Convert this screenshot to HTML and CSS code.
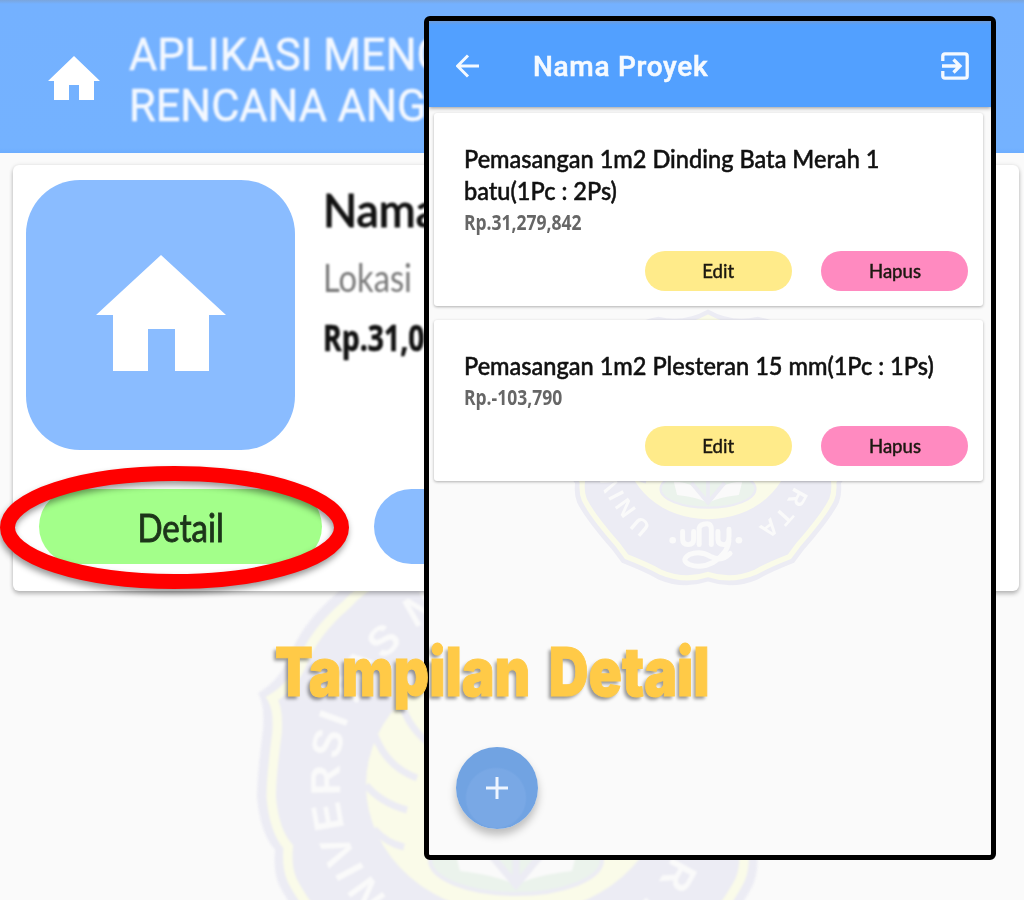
FILE: index.html
```html
<!DOCTYPE html>
<html lang="id">
<head>
<meta charset="utf-8">
<title>Tampilan Detail</title>
<link rel="stylesheet" href="styles.css">
</head>
<body>
<main class="stage">
  <section class="screen">
    <svg class="crest crest-large" viewBox="-270 -360 540 520">
      <defs>
        <path id="shield" d="M0-350 Q-45-325-90-337 Q-150-325-179-292 Q-214-262-226-230 Q-236-205-258-192 Q-251-180-253-155 Q-259-110-259-88 Q-256-52-241-35 Q-243-14-237 0 Q-222 30-174 85 L-156 109 Q-115 125-90 139 Q-45 158 0 143 Q45 158 90 139 Q115 125 156 109 L174 85 Q222 30 237 0 Q243-14 241-35 Q256-52 259-88 Q259-110 253-155 Q251-180 258-192 Q236-205 226-230 Q214-262 179-292 Q150-325 90-337 Q45-325 0-350Z"/>
        <g id="crest">
          <use href="#shield" class="c-body"/>
          <use href="#shield" class="c-band" transform="translate(0 -5) scale(.945)"/>
          <ellipse class="c-gold" cx="0" cy="-100" rx="150" ry="130"/>
          <path class="c-feather" d="M-118-195 Q-112-160-85-140 M-142-152 Q-130-118-99-107 M-150-100 Q-135-82-109-75 M-142-56 Q-130-42-112-38 M118-195 Q112-160 85-140 M142-152 Q130-118 99-107"/>
          <ellipse class="c-green" cx="0" cy="-25" rx="86" ry="34"/>
          <path class="c-page" d="M-62-38 Q-20-38 0-2 Q20-38 62-38 L56-14 Q20-10 0 0 Q-20-10-56-14Z"/>
          <path class="c-feather" d="M0-50 V0 M-30-36 L0 0 L30-36"/>
          <g class="c-letters">
            <text transform="translate(-123 43) rotate(-139)" dy="15">U</text>
            <text transform="translate(-150 10) rotate(-126)" dy="15">N</text>
            <text transform="translate(-167 -13) rotate(-118)" dy="15">I</text>
            <text transform="translate(-179 -34) rotate(-111)" dy="15">V</text>
            <text transform="translate(-189 -68) rotate(-100)" dy="15">E</text>
            <text transform="translate(-191 -105) rotate(-91)" dy="15">R</text>
            <text transform="translate(-189 -142) rotate(-77)" dy="15">S</text>
            <text transform="translate(-183 -167) rotate(-70)" dy="15">I</text>
            <text transform="translate(-170 -192) rotate(-60)" dy="15">T</text>
            <text transform="translate(-155 -220) rotate(-52)" dy="15">A</text>
            <text transform="translate(-133 -245) rotate(-42)" dy="15">S</text>
            <text transform="translate(-96 -277) rotate(-30)" dy="15">N</text>
            <text transform="translate(163 -9) rotate(119)" dy="15">R</text>
            <text transform="translate(139 25) rotate(132)" dy="15">T</text>
            <text transform="translate(112 47) rotate(142)" dy="15">A</text>
          </g>
          <path class="c-script" d="M-46 52 V66 Q-46 76-36 76 Q-26 76-26 66 V52 M-16 76 V46 Q-14 38-2 38 Q6 38 6 48 V76 M18 52 V66 Q18 76 28 76 Q38 76 38 62 V48 M38 66 Q38 90 10 108 Q-12 120-34 112 Q-50 104-34 94 Q-14 86 6 98 Q24 108 40 92"/>
          <circle class="c-dot" cx="-64" cy="68" r="6"/>
          <circle class="c-dot" cx="56" cy="68" r="6"/>
        </g>
      </defs>
      <use href="#crest"/>
    </svg>

    <header class="appbar">
      <svg class="appbar-home" viewBox="0 0 52 44"><path d="M26 0 L52 25 H46 V44 H31 V29 H21 V44 H6 V25 H0Z"/></svg>
      <h1 class="appbar-title"><span>APLIKASI MENG</span><span>RENCANA ANG</span></h1>
    </header>

    <article class="project">
      <div class="project-info">
        <div class="project-tile">
          <svg viewBox="0 0 130 116"><path d="M65 0 L130 60 H113 V116 H79 V74 H52 V116 H17 V60 H0Z"/></svg>
        </div>
        <div class="project-text">
          <h2 class="project-name">Nama</h2>
          <p class="project-place">Lokasi</p>
          <p class="project-cost">Rp.31,0</p>
        </div>
      </div>
      <div class="project-actions">
        <button class="pill pill-green"><span>Detail</span></button>
        <button class="pill pill-blue"></button>
      </div>
    </article>
  </section>

  <svg class="ring" viewBox="0 0 349 123"><ellipse cx="174.500" cy="61.500" rx="167" ry="54"/></svg>

  <section class="phone">
    <svg class="crest crest-small" viewBox="-270 -360 540 520"><use href="#crest"/></svg>
    <header class="phonebar">
      <svg class="back" viewBox="0 0 24 24"><path d="M23 12 H2 M12 1.500 L1.500 12 L12 22.500"/></svg>
      <h2 class="phonebar-title">Nama Proyek</h2>
      <svg class="exit" viewBox="0 0 28 28"><path d="M1.800 9 V4 Q1.800 1.800 4 1.800 H24 Q26.200 1.800 26.200 4 V24 Q26.200 26.200 24 26.200 H4 Q1.800 26.200 1.800 24 V19 M1 14 H19 M12.500 7.500 L19 14 L12.500 20.500"/></svg>
    </header>
    <div class="items">
      <article class="item">
        <h3 class="item-name"><span>Pemasangan 1m2 Dinding Bata Merah 1</span><span>batu(1Pc : 2Ps)</span></h3>
        <p class="item-cost">Rp.31,279,842</p>
        <div class="item-actions">
          <button class="chip chip-edit"><span>Edit</span></button>
          <button class="chip chip-delete"><span>Hapus</span></button>
        </div>
      </article>
      <article class="item">
        <h3 class="item-name"><span>Pemasangan 1m2 Plesteran 15 mm(1Pc : 1Ps)</span></h3>
        <p class="item-cost">Rp.-103,790</p>
        <div class="item-actions">
          <button class="chip chip-edit"><span>Edit</span></button>
          <button class="chip chip-delete"><span>Hapus</span></button>
        </div>
      </article>
    </div>
    <button class="fab" aria-label="Tambah"><svg viewBox="0 0 22 22"><path d="M11 0 V22 M0 11 H22"/></svg></button>
  </section>

  <p class="caption">Tampilan Detail</p>
</main>
</body>
</html>
```
FILE: styles.css
```css
* { box-sizing: border-box; margin: 0; padding: 0; }
body { width: 1024px; height: 900px; overflow: hidden; font-family: Lato, "Liberation Sans", sans-serif; }
button { border: 0; font: inherit; color: inherit; }
.stage { position: relative; width: 1024px; height: 900px; overflow: hidden; background: #fafafa; }
.screen { position: relative; height: 900px; }

.crest { position: absolute; overflow: visible; }
.crest-large { left: 246px; top: 525px; width: 540px; height: 520px; filter: blur(.9px); }
.crest-small { left: 130px; top: 283px; width: 298px; height: 287px; filter: blur(.6px); }
.c-body { fill: #ececf4; }
.c-band { fill: none; stroke: #fafbe9; stroke-width: 10; }
.c-gold { fill: #fafbe9; }
.c-green { fill: #ebf3ec; stroke: #ececf4; stroke-width: 4; }
.c-page { fill: #fafafa; }
.c-feather { fill: none; stroke: #ececf4; stroke-width: 7; }
.c-letters { fill: #fafafa; font: 700 42px "Liberation Sans", sans-serif; text-anchor: middle; }
.c-script { fill: none; stroke: #fafafa; stroke-width: 9; stroke-linecap: round; }
.c-dot { fill: #fafafa; }

.appbar { position: relative; display: flex; align-items: flex-start; height: 153px; padding: 29px 0 0 48px; background: linear-gradient(#7aa5dc 0, #74b1ff 4px, #74b2ff 148px, #6cadff 153px); }
.appbar-home { width: 52px; height: 44px; margin-top: 27px; fill: #fff; filter: blur(.5px); }
.appbar-title { margin-left: 29px; font: 400 45px/51px Roboto, sans-serif; color: #f4f8ff; -webkit-text-stroke: .5px #f4f8ff; white-space: nowrap; filter: blur(.8px); }
.appbar-title span { display: block; transform-origin: 0 0; transform: scaleX(.962); }

.project { position: relative; width: 1006px; height: 426px; margin: 12px 0 0 13px; padding: 15px 13px; background: #fff; border-radius: 6px; box-shadow: 0 3px 4px rgba(0,0,0,.24), 0 0 4px rgba(0,0,0,.1); }
.project-info { display: flex; gap: 28px; }
.project-tile { display: flex; justify-content: center; width: 269px; height: 270px; padding-top: 75px; background: #8abcff; border-radius: 54px; }
.project-tile svg { width: 130px; height: 116px; fill: #fff; }
.project-text { filter: blur(.8px); white-space: nowrap; }
.project-text > * { transform-origin: 0 0; }
.project-name { margin-top: 3px; font-size: 46px; line-height: 54px; font-weight: 500; -webkit-text-stroke: 1px #111; color: #111; transform: scaleX(.97); }
.project-place { margin-top: 17px; font-size: 38px; line-height: 46px; color: #777; transform: scaleX(.86); }
.project-cost { margin-top: 14px; font: 700 35px/48px "Open Sans", sans-serif; color: #111; -webkit-text-stroke: .6px #111; transform: scaleX(.81); }
.project-actions { display: flex; gap: 52px; margin: 39px 0 0 13px; }
.pill { width: 283px; height: 75px; border-radius: 38px; font-size: 38px; color: #1d351a; }
.pill span { display: inline-block; transform: scaleX(.87); -webkit-text-stroke: .9px; filter: blur(.7px); }
.pill-green { background: #a3ff8a; }
.pill-blue { background: #8abcff; }

.ring { position: absolute; left: 0; top: 466px; width: 349px; height: 123px; overflow: visible; filter: drop-shadow(-1px 4px 3px rgba(0,0,0,.4)); }
.ring ellipse { fill: none; stroke: #f00; stroke-width: 15; }

.phone { position: absolute; left: 424px; top: 16px; width: 572px; height: 844px; border: 5px solid #000; border-radius: 6px; background: #fafafa; overflow: hidden; }
.phonebar { position: relative; display: flex; align-items: center; height: 86px; padding: 5px 22px 0 27px; background: linear-gradient(#6f9cd9 0, #52a0ff 4px, #52a0ff 100%); box-shadow: 0 1px 4px rgba(0,0,0,.4); }
.back { width: 24px; height: 24px; margin-top: -2px; fill: none; stroke: #f4f9ff; stroke-width: 3; filter: blur(.3px); }
.phonebar-title { flex: 1; margin-left: 53px; font: 500 28px/36px Roboto, sans-serif; letter-spacing: .7px; color: #f6faff; -webkit-text-stroke: .5px #f6faff; filter: blur(.4px); }
.exit { width: 28px; height: 28px; margin-top: -2px; fill: none; stroke: #f4f9ff; stroke-width: 3.300; filter: blur(.3px); }
.items { position: relative; display: flex; flex-direction: column; gap: 14px; padding: 6px 8px 0 5px; }
.item { background: #fff; border-radius: 3px; padding: 29px 15px 15px 30px; box-shadow: 0 1px 3px rgba(0,0,0,.3); }
.item-name { margin-bottom: 1px; font-size: 25px; line-height: 32px; font-weight: 500; color: #111; white-space: nowrap; filter: blur(.4px); -webkit-text-stroke: .5px #111; }
.item-name span { display: block; width: max-content; transform-origin: 0 0; transform: scaleX(.942); }
.item-cost { width: max-content; font: 700 21px/31px "Open Sans", sans-serif; color: #666; transform-origin: 0 0; transform: scaleX(.833); filter: blur(.5px); }
.item-actions { display: flex; justify-content: flex-end; gap: 29px; margin-top: 13px; }
.chip { width: 147px; height: 40px; border-radius: 20px; font-size: 20px; color: #1c1810; }
.chip span { display: inline-block; transform: translateY(-1px) scaleX(.93); -webkit-text-stroke: .5px; filter: blur(.4px); }
.chip-edit { background: #ffeb8a; }
.chip-delete { background: #ff8ac0; }
.fab { position: absolute; left: 27px; top: 726px; display: grid; place-items: center; width: 82px; height: 82px; border-radius: 50%; background: radial-gradient(circle at 40px 51px, #79a8e5 29px, #71a3e2 31px); box-shadow: 0 6px 8px rgba(0,0,0,.25); }
.fab svg { width: 22px; height: 22px; fill: none; stroke: #eef5ff; stroke-width: 3; }

.caption { position: absolute; left: 275px; top: 630px; font: 900 67px/84px Inter, sans-serif; color: #ffca47; -webkit-text-stroke: 1px #ffca47; white-space: nowrap; word-spacing: 9px; transform-origin: 0 0; transform: scaleX(.822); text-shadow: -3px 3px 4px rgba(0,0,0,.4); }
```
